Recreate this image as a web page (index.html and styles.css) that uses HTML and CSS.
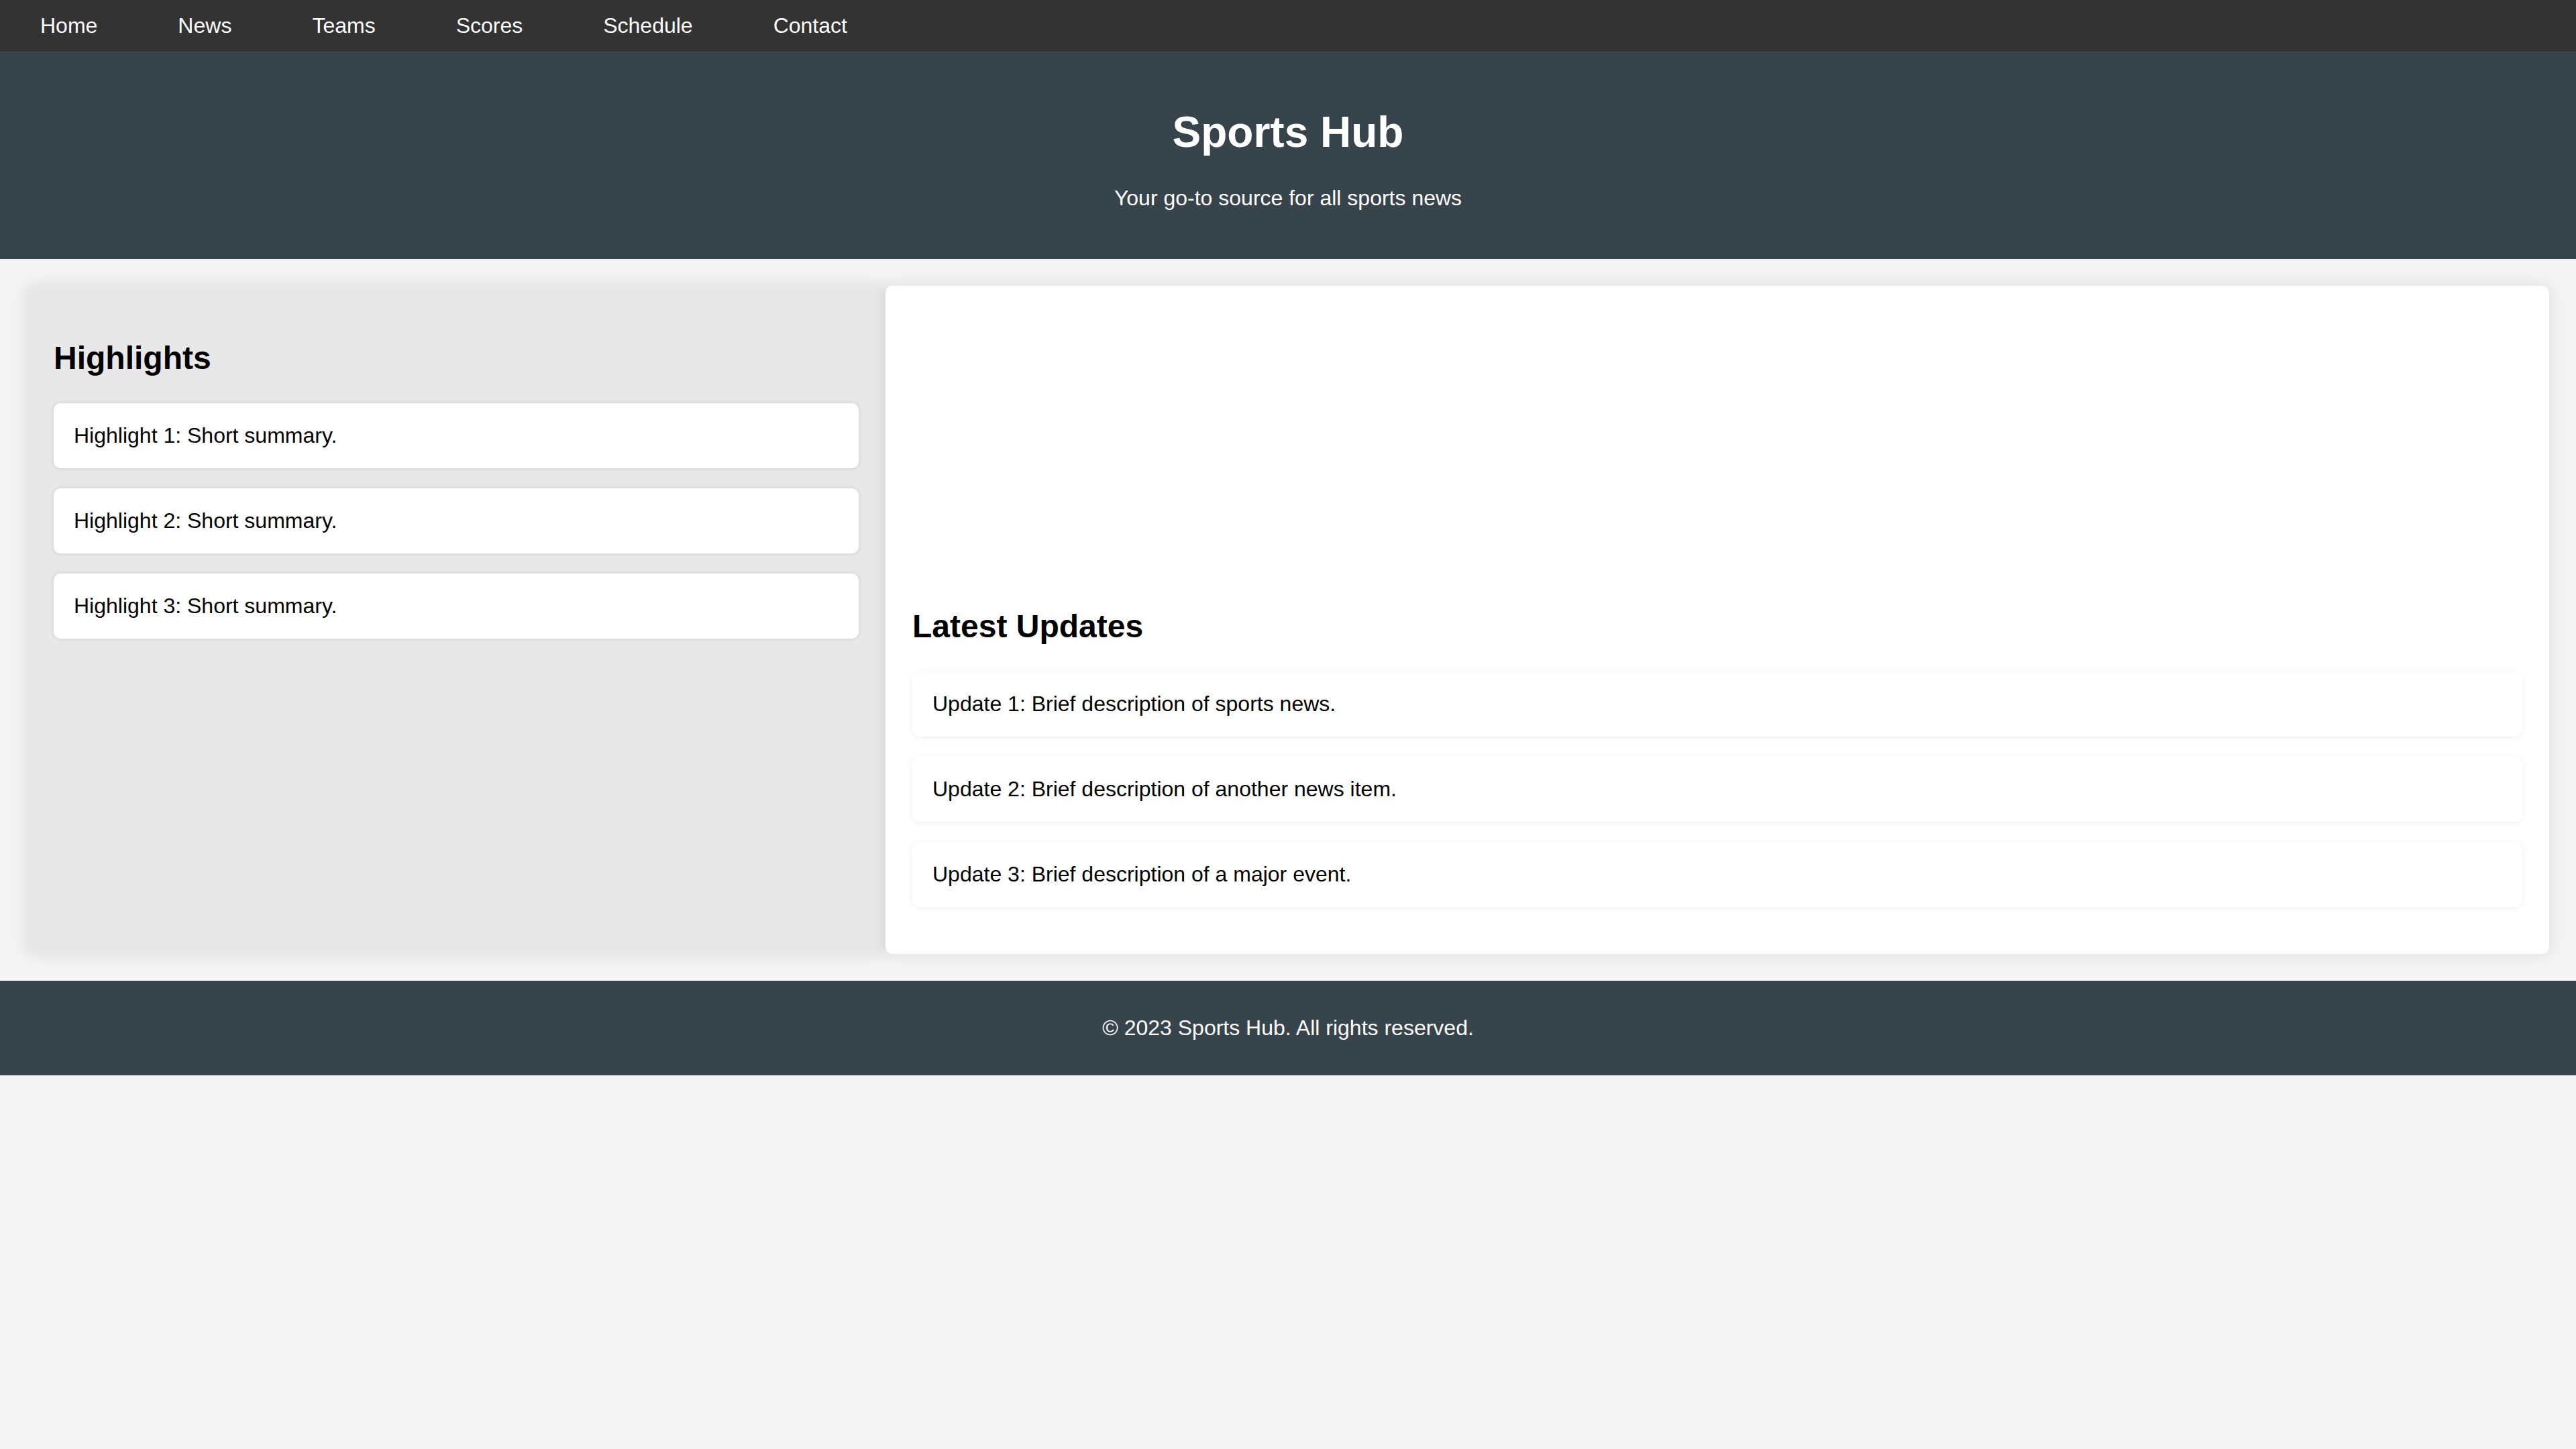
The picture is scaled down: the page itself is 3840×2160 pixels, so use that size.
FILE: index.html
```html
<!DOCTYPE html>
<html lang="en">
<head>
<meta charset="utf-8">
<title>Sports Hub</title>
<link rel="stylesheet" href="styles.css">
</head>
<body>
<nav class="topnav">
  <a href="#">Home</a>
  <a href="#">News</a>
  <a href="#">Teams</a>
  <a href="#">Scores</a>
  <a href="#">Schedule</a>
  <a href="#">Contact</a>
</nav>
<header class="hero">
  <h1>Sports Hub</h1>
  <p>Your go-to source for all sports news</p>
</header>
<main class="content">
  <section class="panel panel-side">
    <h2>Highlights</h2>
    <div class="card card-highlight">Highlight 1: Short summary.</div>
    <div class="card card-highlight">Highlight 2: Short summary.</div>
    <div class="card card-highlight">Highlight 3: Short summary.</div>
  </section>
  <section class="panel panel-main">
    <div class="media"></div>
    <h2>Latest Updates</h2>
    <div class="card card-update">Update 1: Brief description of sports news.</div>
    <div class="card card-update">Update 2: Brief description of another news item.</div>
    <div class="card card-update">Update 3: Brief description of a major event.</div>
  </section>
</main>
<footer class="footer">
  <p>&copy; 2023 Sports Hub. All rights reserved.</p>
</footer>
</body>
</html>
```

FILE: styles.css
```css
html, body {
  margin: 0;
  padding: 0;
}
body {
  background: #f4f4f4;
  font-family: "Liberation Sans", Arial, Helvetica, sans-serif;
  font-size: 32px;
  color: #000;
}
.topnav {
  display: flex;
  background: #333333;
}
.topnav a {
  display: block;
  padding: 20px 60px;
  color: #fff;
  text-decoration: none;
}
.hero {
  background: #38444b;
  color: #fff;
  text-align: center;
  padding: 40px;
}
.hero h1 {
  font-size: 64px;
  margin: 43px 0;
}
.hero p {
  margin: 32px 0;
}
.content {
  display: flex;
  padding: 40px;
}
.panel {
  padding: 40px;
  border-radius: 10px;
  box-shadow: 0 0 24px rgba(0, 0, 0, 0.1);
}
.panel h2 {
  font-size: 48px;
  margin: 40px 0;
}
.panel-side {
  flex: 1;
  background: #e8e8e8;
}
.panel-main {
  flex: 2;
  background: #fff;
}
.media {
  height: 400px;
}
.card {
  background: #fff;
  padding: 30px;
  border-radius: 10px;
  margin-bottom: 30px;
}
.card-highlight {
  box-shadow: 0 0 6px rgba(0, 0, 0, 0.12);
}
.card-update {
  box-shadow: 0 2px 10px rgba(0, 0, 0, 0.06);
}
.footer {
  background: #38444b;
  color: #fff;
  text-align: center;
  padding: 20px;
}
.footer p {
  margin: 32px 0;
}
```
